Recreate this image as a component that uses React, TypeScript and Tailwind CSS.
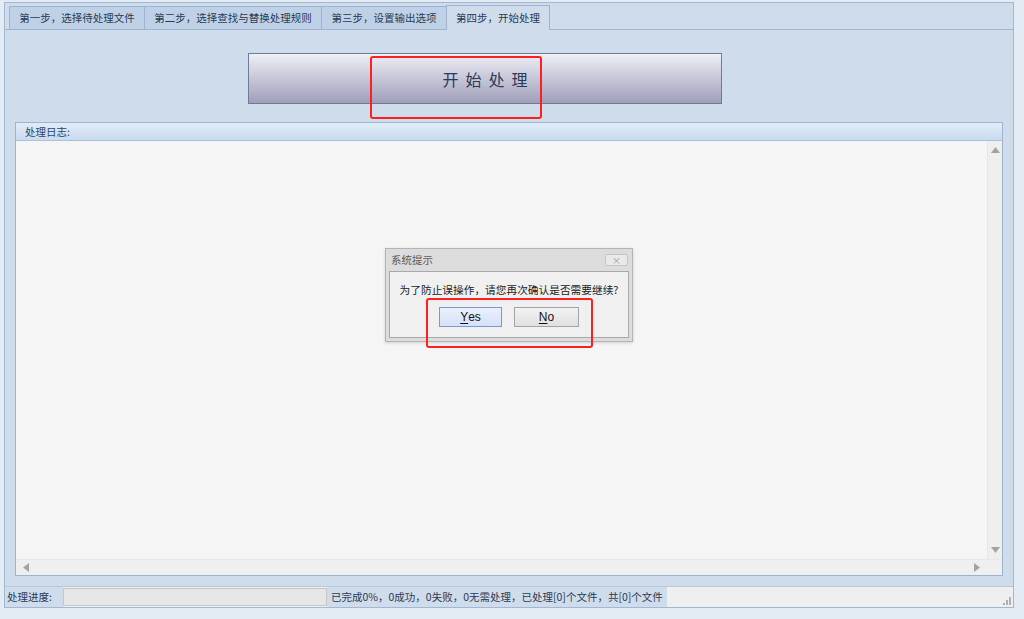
import React from "react";

const font = { fontFamily: '"Noto Sans CJK SC", "Noto Sans", sans-serif' };

function Tab({ label, w, active }: { label: string; w: number; active?: boolean }) {
  return (
    <div
      style={{ width: w }}
      className={
        active
          ? "h-[25px] -mb-px flex items-center justify-center border border-b-0 border-[#9fb4d0] bg-[#cfdcec] text-[10.5px] text-[#2a3a52] whitespace-nowrap"
          : "h-[23px] flex items-center justify-center border border-r-0 border-b-0 border-[#9fb4d0] bg-[#bfd1e6] text-[10.5px] text-[#2a3a52] whitespace-nowrap"
      }
    >
      {label}
    </div>
  );
}

function TriUp() {
  return (
    <svg width="9" height="6" viewBox="0 0 9 6"><path d="M4.5 0 L9 6 L0 6 Z" fill="#a3a3a3" /></svg>
  );
}
function TriDown() {
  return (
    <svg width="9" height="6" viewBox="0 0 9 6"><path d="M0 0 L9 0 L4.5 6 Z" fill="#a3a3a3" /></svg>
  );
}
function TriLeft() {
  return (
    <svg width="6" height="9" viewBox="0 0 6 9"><path d="M6 0 L6 9 L0 4.5 Z" fill="#a3a3a3" /></svg>
  );
}
function TriRight() {
  return (
    <svg width="6" height="9" viewBox="0 0 6 9"><path d="M0 0 L6 4.5 L0 9 Z" fill="#a3a3a3" /></svg>
  );
}

export default function App() {
  return (
    <div className="relative w-[1024px] h-[619px] bg-[#e3ebf5] overflow-hidden pt-[2px] pl-[4px]" style={font}>
      <div className="w-[1010px] h-[606px] border border-[#a3b7d2] bg-[#cfdcec] flex flex-col">
        {/* tabs */}
        <div className="h-[27px] flex items-end pl-[4px] border-b border-[#9fb4d0]">
          <Tab label="第一步，选择待处理文件" w={135} />
          <Tab label="第二步，选择查找与替换处理规则" w={177} />
          <Tab label="第三步，设置输出选项" w={125} />
          <Tab label="第四步，开始处理" w={104} active />
        </div>
        {/* panel */}
        <div className="h-[556px] flex flex-col">
          <div className="mt-[23px] ml-[243px] w-[474px] h-[51px] border border-[#6f7b97] bg-gradient-to-b from-[#efeff7] to-[#a09fba] flex items-center justify-center">
            <span className="text-[16px] tracking-[7px] text-[#2b3a56] pl-[7px]">开始处理</span>
          </div>
          <div className="mt-[18px] ml-[10px] w-[988px] h-[454px] border border-[#9cb3d2] flex flex-col bg-[#f5f5f5]">
            <div className="h-[18px] bg-gradient-to-b from-[#e2ecf8] to-[#c9dbf0] border-b border-[#aac0dc] flex items-center pl-[9px] text-[10.5px] text-[#2c4468]">
              处理日志:
            </div>
            <div className="flex-1 flex flex-col">
              <div className="flex-1 flex">
                <div className="flex-1 bg-[#f5f5f5]" />
                <div className="w-[15px] bg-[#efefef] border-l border-[#e6e6e6] flex flex-col items-center justify-between py-[6px]">
                  <TriUp />
                  <TriDown />
                </div>
              </div>
              <div className="h-[16px] flex border-t border-[#e8e8e8]">
                <div className="flex-1 bg-[#efefef] flex items-center justify-between px-[7px]">
                  <TriLeft />
                  <TriRight />
                </div>
                <div className="w-[15px] bg-[#efefef]" />
              </div>
            </div>
          </div>
        </div>
        {/* status bar */}
        <div className="h-[21px] flex items-stretch border-t border-[#b7c8de] bg-[#efefef] text-[10.5px] text-[#2a3a52] whitespace-nowrap">
          <div className="w-[58px] bg-[#cfdcec] flex items-center pl-[2px]">处理进度:</div>
          <div className="w-[264px] my-[1px] border border-[#c6c6c6] bg-[#e6e6e6]" />
          <div className="w-[340px] bg-[#cfdcec] flex items-center pl-[4px]">
            已完成0%，0成功，0失败，0无需处理，已处理[0]个文件，共[0]个文件
          </div>
          <div className="flex-1 relative">
            <div className="absolute right-[2px] bottom-[2px] flex items-end gap-[1px]">
              <div className="w-[2px] h-[2px] bg-[#b0b0b0]" />
              <div className="w-[2px] h-[5px] bg-[#b0b0b0]" />
              <div className="w-[2px] h-[8px] bg-[#b0b0b0]" />
            </div>
          </div>
        </div>
      </div>

      {/* red annotation 1 */}
      <div className="absolute left-[370px] top-[56px] w-[172px] h-[63px] border-2 border-[#ff1f1f] rounded-[3px]" />

      {/* dialog */}
      <div className="absolute left-[385px] top-[248px] w-[248px] h-[94px] bg-[#dcdcdc] border border-[#b4b4b4] shadow-[0_1px_3px_rgba(0,0,0,0.15)] flex flex-col">
        <div className="h-[22px] flex items-center justify-between pl-[5px] pr-[4px]">
          <span className="text-[10.5px] text-[#5a5a5a]">系统提示</span>
          <div className="w-[23px] h-[12px] border border-[#c4c4c4] bg-[#e9e9e9] rounded-[2px] flex items-center justify-center text-[9px] leading-none text-[#9a9a9a]">
            ×
          </div>
        </div>
        <div className="mx-[3px] mb-[3px] flex-1 bg-[#f0f0f0] border border-[#a9a9a9] flex flex-col items-center">
          <div className="mt-[10px] text-[10.7px] text-[#222] whitespace-nowrap">为了防止误操作，请您再次确认是否需要继续?</div>
          <div className="mt-[9px] flex gap-[12px]">
            <div className="w-[63px] h-[20px] border border-[#7b98cf] bg-gradient-to-b from-[#eaf1fd] to-[#d4e1f8] flex items-center justify-center text-[12px] text-[#111]" style={{ fontFamily: '"Liberation Sans", sans-serif' }}>
              <span className="underline underline-offset-2">Y</span>es
            </div>
            <div className="w-[65px] h-[20px] border border-[#a4a4a4] bg-gradient-to-b from-[#f3f3f3] to-[#e0e0e0] flex items-center justify-center text-[12px] text-[#111]" style={{ fontFamily: '"Liberation Sans", sans-serif' }}>
              <span className="underline underline-offset-2">N</span>o
            </div>
          </div>
        </div>
      </div>

      {/* red annotation 2 */}
      <div className="absolute left-[426px] top-[298px] w-[167px] h-[50px] border-2 border-[#ff1f1f] rounded-[3px]" />
    </div>
  );
}
